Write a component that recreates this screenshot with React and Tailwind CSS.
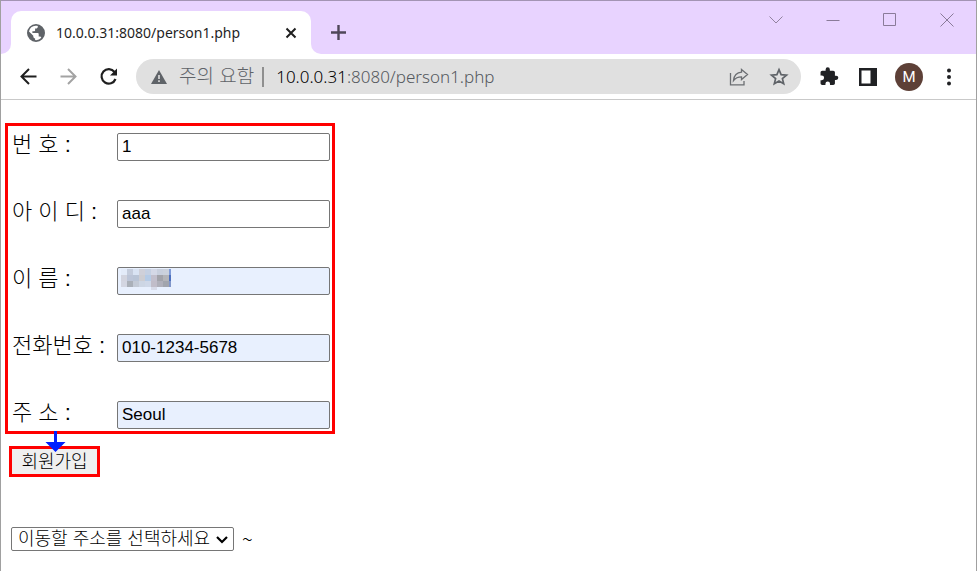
import React, { useState } from 'react';

const FIELDS = [
  { id: 'no', label: '번 호 :', value: '1', filled: false },
  { id: 'userid', label: '아 이 디 :', value: 'aaa', filled: false },
  { id: 'name', label: '이 름 :', value: '', filled: true, masked: true },
  { id: 'phone', label: '전화번호 :', value: '010-1234-5678', filled: true },
  { id: 'addr', label: '주 소 :', value: 'Seoul', filled: true },
];

// 6px blocks hiding the name
const MOSAIC = [
  ['#e3ebf9', '#c4ccdc', '#d9e3f3', '#cfd0d9', '#c5d0e2', '#d4d8e6', '#c8cfdd', '#cbd1dc', '#7f9bd8'],
  ['#d2d4df', '#bcc5d8', '#b9c4d6', '#cdcdd2', '#b5cbe6', '#c2bfcc', '#a2a3aa', '#b3b4b8', '#4d70be'],
  ['#d3d6e2', '#aab0b9', '#c3cad6', '#cdd6e4', '#cfd8e8', '#c1bdc9', '#b0b0ba', '#a2a5ad', '#8096ca'],
];

function Mosaic() {
  return (
    <svg className="absolute left-1 top-[2px]" width="50" height="21" shapeRendering="crispEdges" aria-hidden="true">
      {MOSAIC.map((row, y) =>
        row.map((color, x) => <rect key={`${x}-${y}`} x={x * 6} y={y * 6} width="6" height="6" fill={color} />)
      )}
      <rect x="30" y="18" width="6" height="3" fill="#d8dbe9" />
    </svg>
  );
}

function TabStrip() {
  return (
    <header className="flex h-[54px] items-end justify-between border-t border-[#a394b4] bg-[#e8d3ff]">
      <div className="flex items-end">
        <div className="h-[43px] w-[10px] bg-white">
          <div className="h-full rounded-br-[10px] bg-[#e8d3ff]" />
        </div>
        <div className="flex h-[43px] w-[300px] items-center rounded-t-[10px] bg-white pl-4 pr-3">
          <svg width="18" height="18" viewBox="2 2 20 20" fill="#5f6368" aria-hidden="true">
            <path d="M12 2a10 10 0 1 0 0 20 10 10 0 0 0 0-20zm-.3 2c.8 0 1.600.1 2.300.3v.7c0 1.100-.9 2-2 2h-1v2c0 .6-.4 1-1 1H8v2h6c.6 0 1 .4 1 1v3h1c.9 0 1.600.5 1.900 1.300A8 8 0 0 1 11 19.900V18c-1.100 0-2-.9-2-2v-1l-4.800-4.800A8 8 0 0 1 11.700 4z" />
          </svg>
          <span className="ml-[11px] font-['Noto_Sans',sans-serif] text-[14px] leading-5 text-[#1f1f1f]">
            10.0.0.31:8080/person1.php
          </span>
          <button type="button" aria-label="Close tab" className="ml-auto flex size-4 items-center justify-center">
            <svg width="12" height="12" viewBox="0 0 12 12" stroke="#1f1f1f" strokeWidth="2" fill="none">
              <path d="M1.500 1.500l9 9M10.500 1.500l-9 9" />
            </svg>
          </button>
        </div>
        <div className="h-[43px] w-[10px] bg-white">
          <div className="h-full rounded-bl-[10px] bg-[#e8d3ff]" />
        </div>
        <button type="button" aria-label="New tab" className="mb-[11px] ml-2 flex size-5 items-center justify-center">
          <svg width="16" height="16" viewBox="0 0 16 16" stroke="#4f4759" strokeWidth="2.400" fill="none">
            <path d="M7.500 0v15M0 7.500h15" />
          </svg>
        </button>
      </div>
      <div className="mr-[22px] flex gap-[43px] self-start pt-3">
        <button type="button" aria-label="Search tabs">
          <svg width="14" height="14" viewBox="0 0 14 14" stroke="#92839f" fill="none"><path d="M.5 3.500l6.500 6.500 6.500-6.500" /></svg>
        </button>
        <button type="button" aria-label="Minimize">
          <svg width="14" height="14" viewBox="0 0 14 14" stroke="#8a7b99" fill="none"><path d="M.5 7.500h13" /></svg>
        </button>
        <button type="button" aria-label="Maximize">
          <svg width="14" height="14" viewBox="0 0 14 14" stroke="#8a7b99" fill="none"><path d="M.5.500h12v12H.5z" /></svg>
        </button>
        <button type="button" aria-label="Close">
          <svg width="14" height="14" viewBox="0 0 14 14" stroke="#8a7b99" fill="none"><path d="M.5.5l13 13M13.500.5l-13 13" /></svg>
        </button>
      </div>
    </header>
  );
}

function Toolbar() {
  return (
    <nav className="flex h-[46px] items-center border-b border-[#c9c9c9] bg-white pl-[18px] pr-[18px]">
      <div className="flex gap-5">
        <button type="button" aria-label="Back">
          <svg width="20" height="20" viewBox="0 0 20 20" stroke="#1f1f1f" strokeWidth="2" fill="none">
            <path d="M17.500 9.500H3M10 2L2.500 9.500 10 17" />
          </svg>
        </button>
        <button type="button" aria-label="Forward">
          <svg width="20" height="20" viewBox="0 0 20 20" stroke="#a3a3a3" strokeWidth="2" fill="none">
            <path d="M1.500 9.500H16M9 2l7.500 7.500L9 17" />
          </svg>
        </button>
        <button type="button" aria-label="Reload">
          <svg width="20" height="20" viewBox="0 0 20 20" fill="none">
            <path d="M15.500 5A7.200 7.200 0 1 0 16.500 12" stroke="#1f1f1f" strokeWidth="2.200" />
            <path d="M18 1.500v7h-7z" fill="#1f1f1f" />
          </svg>
        </button>
      </div>

      <div className="ml-[17px] flex h-[35px] flex-1 items-center rounded-full bg-[#e0e0e0] pl-[15px] pr-3">
        <svg width="16" height="14" viewBox="0 0 16 14" aria-hidden="true">
          <path d="M8 0l8 14H0z" fill="#5f6368" />
          <path d="M7.200 5h1.600v4H7.200zM7.200 10.300h1.600v1.700H7.200z" fill="#e0e0e0" />
        </svg>
        <span className="ml-3 whitespace-nowrap font-['Liberation_Sans','Noto_Sans_CJK_KR',sans-serif] text-[19px] font-light leading-6 text-[#5f6368]">
          주의 요함
        </span>
        <span className="ml-2 h-5 w-[2px] bg-[#8f8f8f]" />
        <div
          role="textbox"
          aria-label="Address"
          contentEditable
          suppressContentEditableWarning
          spellCheck={false}
          className="ml-3 flex-1 whitespace-nowrap font-['Noto_Sans',sans-serif] text-[17px] font-light leading-6 text-[#55595e] outline-none"
        >
          <span className="text-black">10.0.0.31</span>:8080/person1.php
        </div>
        <button type="button" aria-label="Share">
          <svg width="20" height="20" viewBox="0 0 20 20" stroke="#6b6e72" strokeWidth="1.300" fill="none">
            <path d="M1.500 6v11.800h13.500V14M12.500 2.500l6 5-6 5V9.800c-3.500 0-6 1-8 3.700.5-4.500 3-8 8-8.300z" />
          </svg>
        </button>
        <button type="button" aria-label="Bookmark this tab" className="ml-5">
          <svg width="20" height="20" viewBox="0 0 20 20" stroke="#5f6368" strokeWidth="1.700" fill="none">
            <path d="M10 2.700l2.100 5 5.400.4-4.100 3.500 1.300 5.200L10 14l-4.700 2.800 1.300-5.200-4.100-3.500 5.400-.4z" />
          </svg>
        </button>
      </div>

      <div className="ml-[17px] flex items-center">
        <button type="button" aria-label="Extensions">
          <svg width="22" height="22" viewBox="0 0 26 26" fill="#202124">
            <path d="M21.500 11.500H20V7.500c0-1.100-.9-2-2-2h-4V4a2.500 2.500 0 0 0-5 0v1.500H5c-1.100 0-2 .9-2 2v3.800h1.500a2.700 2.700 0 0 1 0 5.400H3v3.800c0 1.100.9 2 2 2h3.800V21a2.700 2.700 0 0 1 5.400 0v1.500H18c1.100 0 2-.9 2-2v-4h1.500a2.500 2.500 0 0 0 0-5z" />
          </svg>
        </button>
        <button type="button" aria-label="Side panel" className="ml-[19px]">
          <svg width="18" height="18" viewBox="0 0 18 18">
            <path d="M0 0h18v18H0z" fill="#202124" />
            <path d="M2.500 2.500h9v13h-9z" fill="#fff" />
          </svg>
        </button>
        <button
          type="button"
          aria-label="Profile"
          className="ml-[18px] size-7 rounded-full bg-[#5d4037] font-['Roboto',sans-serif] text-[15px] leading-7 text-white"
        >
          M
        </button>
        <button type="button" aria-label="Menu" className="ml-[17px]">
          <svg width="18" height="18" viewBox="0 0 18 18" fill="#202124">
            <circle cx="9" cy="2.500" r="2" />
            <circle cx="9" cy="9" r="2" />
            <circle cx="9" cy="15.500" r="2" />
          </svg>
        </button>
      </div>
    </nav>
  );
}

function Field({ id, label, value, filled, masked, onChange }) {
  return (
    <div className="flex h-7 items-start">
      <label htmlFor={id} className="w-[105px] whitespace-nowrap text-[22px] font-light leading-6">
        {label}
      </label>
      <div className="relative flex-1">
        <input
          id={id}
          type="text"
          value={value}
          onChange={(e) => onChange(id, e.target.value)}
          className={`block h-7 w-full rounded-[2px] border border-[#767676] px-1 font-['Liberation_Sans',sans-serif] text-[17px] text-black ${
            filled ? 'bg-[#e8f0fe]' : 'bg-white'
          }`}
        />
        {masked && <Mosaic />}
      </div>
    </div>
  );
}

export default function App() {
  const [values, setValues] = useState(Object.fromEntries(FIELDS.map((f) => [f.id, f.value])));

  const handleChange = (id, value) => setValues((prev) => ({ ...prev, [id]: value }));

  return (
    <div className="min-h-screen border-x border-[#a0a0a0] bg-white">
      <TabStrip />
      <Toolbar />
      <main className="px-1 pt-[23px] font-['Liberation_Sans','Noto_Sans_CJK_KR',sans-serif] text-black">
        <form onSubmit={(e) => e.preventDefault()}>
          <div className="flex w-[330px] flex-col gap-[39px] border-[3px] border-[#ff0000] pb-[2px] pl-1 pr-[2px] pt-[7px]">
            {FIELDS.map((f) => (
              <Field key={f.id} {...f} value={values[f.id]} onChange={handleChange} />
            ))}
          </div>
          <div className="relative ml-1 mt-3 w-fit">
            <button
              type="submit"
              className="block h-[31px] w-[91px] whitespace-nowrap border-[3px] border-[#ff0000] bg-[#efefef] text-[18px] font-light leading-6"
            >
              회원가입
            </button>
            {/* arrow from the form to the button */}
            <svg className="absolute -top-[15px] left-9" width="21" height="21" viewBox="0 0 21 21" fill="#0020ff" aria-hidden="true">
              <path d="M9 0h3v11h8.500L10.500 21 .5 11H9z" />
            </svg>
          </div>
        </form>

        <div className="ml-[6px] mt-[50px] flex items-center gap-2">
          <div className="relative">
            <select
              aria-label="이동할 주소"
              className="block h-6 w-[223px] appearance-none rounded-[2px] border border-[#767676] bg-white pl-[6px] text-[18px] font-light leading-5 text-black"
            >
              <option>이동할 주소를 선택하세요</option>
            </select>
            <svg className="pointer-events-none absolute right-[5px] top-2" width="14" height="10" viewBox="0 0 14 10" stroke="#000" strokeWidth="2.200" fill="none" aria-hidden="true">
              <path d="M2 2l5 5 5-5" />
            </svg>
          </div>
          <span className="font-['Noto_Sans_CJK_KR',sans-serif] text-[20px] font-light leading-5">~</span>
        </div>
      </main>
    </div>
  );
}
